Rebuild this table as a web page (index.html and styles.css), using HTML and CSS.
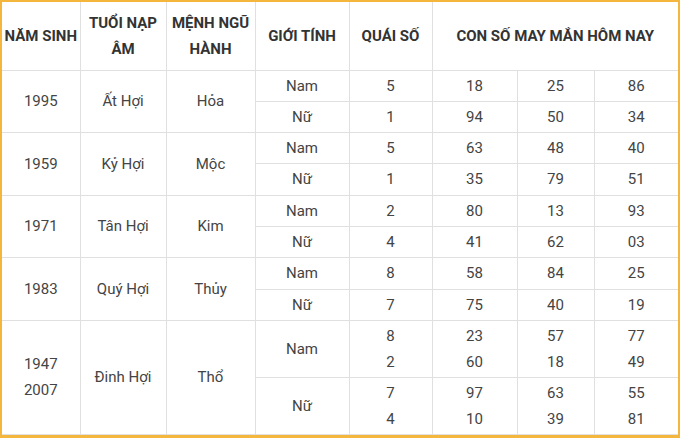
FILE: index.html
```html
<!DOCTYPE html>
<html lang="vi">
<head>
<meta charset="utf-8">
<link rel="stylesheet" href="styles.css">
</head>
<body>
<div class="frame">
<table class="luck">
<colgroup>
<col class="c1"><col class="c2"><col class="c3"><col class="c4"><col class="c5"><col class="c6"><col class="c7"><col class="c8">
</colgroup>
<thead>
<tr class="head">
<th>NĂM SINH</th>
<th>TUỔI NẠP ÂM</th>
<th>MỆNH NGŨ HÀNH</th>
<th>GIỚI TÍNH</th>
<th>QUÁI SỐ</th>
<th colspan="3">CON SỐ MAY MẮN HÔM NAY</th>
</tr>
</thead>
<tbody>
<tr class="r"><td rowspan="2">1995</td><td rowspan="2">Ất Hợi</td><td rowspan="2">Hỏa</td><td>Nam</td><td>5</td><td>18</td><td>25</td><td>86</td></tr>
<tr class="r"><td>Nữ</td><td>1</td><td>94</td><td>50</td><td>34</td></tr>
<tr class="r"><td rowspan="2">1959</td><td rowspan="2">Kỷ Hợi</td><td rowspan="2">Mộc</td><td>Nam</td><td>5</td><td>63</td><td>48</td><td>40</td></tr>
<tr class="r r2"><td>Nữ</td><td>1</td><td>35</td><td>79</td><td>51</td></tr>
<tr class="r"><td rowspan="2">1971</td><td rowspan="2">Tân Hợi</td><td rowspan="2">Kim</td><td>Nam</td><td>2</td><td>80</td><td>13</td><td>93</td></tr>
<tr class="r"><td>Nữ</td><td>4</td><td>41</td><td>62</td><td>03</td></tr>
<tr class="r r2"><td rowspan="2">1983</td><td rowspan="2">Quý Hợi</td><td rowspan="2">Thủy</td><td>Nam</td><td>8</td><td>58</td><td>84</td><td>25</td></tr>
<tr class="r"><td>Nữ</td><td>7</td><td>75</td><td>40</td><td>19</td></tr>
<tr class="tall"><td rowspan="2">1947<br>2007</td><td rowspan="2">Đinh Hợi</td><td rowspan="2">Thổ</td><td>Nam</td><td>8<br>2</td><td>23<br>60</td><td>57<br>18</td><td>77<br>49</td></tr>
<tr class="tall"><td>Nữ</td><td>7<br>4</td><td>97<br>10</td><td>63<br>39</td><td>55<br>81</td></tr>
</tbody>
</table>
</div>
</body>
</html>
```
FILE: styles.css
```css
html, body {
  margin: 0;
  padding: 0;
  background: #ffffff;
}
.frame {
  width: 680px;
  height: 438px;
  box-sizing: border-box;
  border: 2px solid #f4b63c;
  border-bottom-width: 3px;
  overflow: hidden;
  background: #fff;
}
.luck {
  width: 676px;
  table-layout: fixed;
  border-collapse: collapse;
  font-family: Roboto, "Liberation Sans", Arial, sans-serif;
  font-size: 15px;
  line-height: 26px;
  color: #444;
}
.c1 { width: 78px; }
.c2 { width: 86px; }
.c3 { width: 89px; }
.c4 { width: 94px; }
.c5 { width: 83px; }
.c6 { width: 85px; }
.c7 { width: 77px; }
.c8 { width: 84px; }
.luck th, .luck td {
  border: 1px solid #e0e0e0;
  text-align: center;
  vertical-align: middle;
  padding: 0 4px;
}
.luck th {
  font-weight: 700;
  color: #333;
  padding: 0 1px;
}
.luck tr > :first-child { border-left: none; }
.luck tr > :last-child { border-right: none; }
.luck thead th { border-top: none; }
.head { height: 68px; }
.r { height: 31px; }
.r2 { height: 32px; }
.tall { height: 57px; }
```
